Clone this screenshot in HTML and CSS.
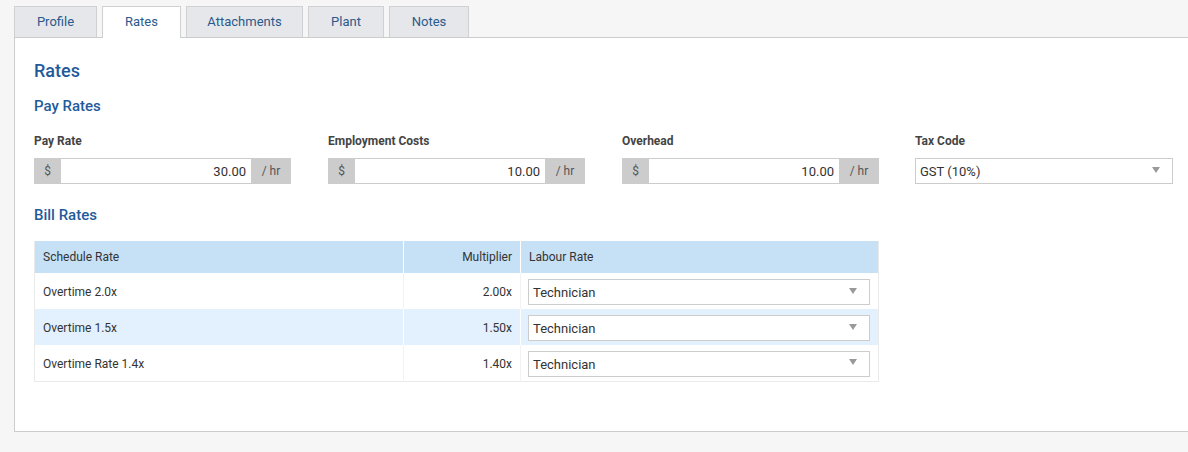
FILE: index.html
```html
<!DOCTYPE html>
<html>
<head>
<meta charset="utf-8">
<link rel="stylesheet" href="styles.css">
</head>
<body>
<div class="page">
  <div class="tabs">
    <div class="tab t-profile">Profile</div>
    <div class="tab t-rates active">Rates</div>
    <div class="tab t-attach">Attachments</div>
    <div class="tab t-plant">Plant</div>
    <div class="tab t-notes">Notes</div>
  </div>
  <div class="panel">
    <h1 class="title">Rates</h1>
    <h2 class="subtitle">Pay Rates</h2>
    <div class="fields">
      <div class="field">
        <div class="label">Pay Rate</div>
        <div class="igroup"><span class="addon pre">$</span><span class="ival">30.00</span><span class="addon post">/ hr</span></div>
      </div>
      <div class="field">
        <div class="label">Employment Costs</div>
        <div class="igroup"><span class="addon pre">$</span><span class="ival">10.00</span><span class="addon post">/ hr</span></div>
      </div>
      <div class="field">
        <div class="label">Overhead</div>
        <div class="igroup"><span class="addon pre">$</span><span class="ival">10.00</span><span class="addon post">/ hr</span></div>
      </div>
      <div class="field">
        <div class="label">Tax Code</div>
        <div class="select big"><span>GST (10%)</span><span class="caret"></span></div>
      </div>
    </div>
    <h2 class="subtitle bill">Bill Rates</h2>
    <table class="grid">
      <thead>
        <tr><th class="c1">Schedule Rate</th><th class="c2">Multiplier</th><th class="c3">Labour Rate</th></tr>
      </thead>
      <tbody>
        <tr><td class="c1">Overtime 2.0x</td><td class="c2">2.00x</td><td class="c3"><div class="select"><span>Technician</span><span class="caret"></span></div></td></tr>
        <tr class="alt"><td class="c1">Overtime 1.5x</td><td class="c2">1.50x</td><td class="c3"><div class="select"><span>Technician</span><span class="caret"></span></div></td></tr>
        <tr><td class="c1">Overtime Rate 1.4x</td><td class="c2">1.40x</td><td class="c3"><div class="select"><span>Technician</span><span class="caret"></span></div></td></tr>
      </tbody>
    </table>
  </div>
</div>
</body>
</html>
```
FILE: styles.css
```css
* { box-sizing: border-box; }
html, body { margin: 0; padding: 0; }
body {
  background: #f5f6f5;
  font-family: Roboto, "Liberation Sans", Arial, sans-serif;
  color: #333;
  overflow: hidden;
}
.page { padding: 6px 0 0 14px; width: 1188px; height: 452px; }
.tabs { display: flex; gap: 5px; height: 31px; position: relative; z-index: 1; }
.tab {
  height: 31px;
  border: 1px solid #cfd0d2;
  border-bottom: none;
  background: #e6e7eb;
  color: #2a5a8c;
  font-size: 13px;
  line-height: 30px;
  text-align: center;
}
.t-profile { width: 83px; }
.t-rates { width: 79px; }
.t-attach { width: 117px; }
.t-plant { width: 76px; }
.t-notes { width: 80px; }
.tab.active { background: #fff; height: 32px; }
.panel {
  background: #fff;
  border: 1px solid #cccccc;
  border-right: none;
  height: 395px;
  padding: 22px 0 0 19px;
}
.title {
  margin: 0;
  font-size: 18px;
  line-height: 22px;
  font-weight: 500;
  color: #1f5b9b;
}
.subtitle {
  margin: 15px 0 0;
  font-size: 15px;
  line-height: 18px;
  font-weight: 500;
  color: #1f5b9b;
}
.subtitle.bill { margin-top: 22px; }
.fields {
  display: grid;
  grid-template-columns: 257px 257px 257px 257px;
  column-gap: 37px;
  margin-top: 19px;
}
.field:last-child { margin-left: -1px; }
.label {
  font-size: 12px;
  line-height: 14px;
  font-weight: 700;
  color: #444;
  margin-bottom: 10px;
}
.igroup {
  display: flex;
  height: 26px;
  border-top: 1px solid #cccccc;
  border-bottom: 1px solid #cccccc;
}
.addon {
  background: #cccccc;
  color: #555;
  font-size: 12px;
  line-height: 24px;
  text-align: center;
}
.addon.pre { width: 27px; }
.addon.post { width: 40px; }
.ival {
  flex: 1;
  background: #fff;
  text-align: right;
  font-size: 13px;
  line-height: 25px;
  padding-right: 5px;
  color: #333;
}
.select {
  display: flex;
  align-items: center;
  justify-content: space-between;
  height: 26px;
  border: 1px solid #cccccc;
  background: #fff;
  padding: 1px 12px 0 4px;
  font-size: 13px;
  color: #333;
}
.caret {
  width: 0; height: 0;
  border-left: 4px solid transparent;
  border-right: 4px solid transparent;
  border-top: 6px solid #999;
  margin-top: -4px;
}
.grid {
  margin-top: 17px;
  border-collapse: collapse;
  width: 844px;
  table-layout: fixed;
  border-left: 1px solid #eaeaea;
  border-right: 1px solid #eaeaea;
  border-bottom: 1px solid #eaeaea;
  font-size: 12px;
}
.grid th {
  background: #c6e1f6;
  height: 32px;
  font-weight: 400;
  color: #333;
  text-align: left;
  padding: 0 8px;
  border-right: 1px solid #fff;
}
.grid td {
  height: 36px;
  padding: 2px 8px 0;
  border-right: 1px solid #fff;
  color: #333;
}
.grid tr.alt td { background: #e3f0fd; }
.grid td.c3, .grid th.c3 { border-right: none; }
.grid .c1 { width: 369px; }
.grid .c2 { width: 117px; text-align: right; }
.grid .c3 { width: 358px; }
.grid td.c3 { padding-left: 7px; }
.grid tr:not(.alt) td.c1, .grid tr:not(.alt) td.c2 { border-right-color: #f2f2f2; }
```
